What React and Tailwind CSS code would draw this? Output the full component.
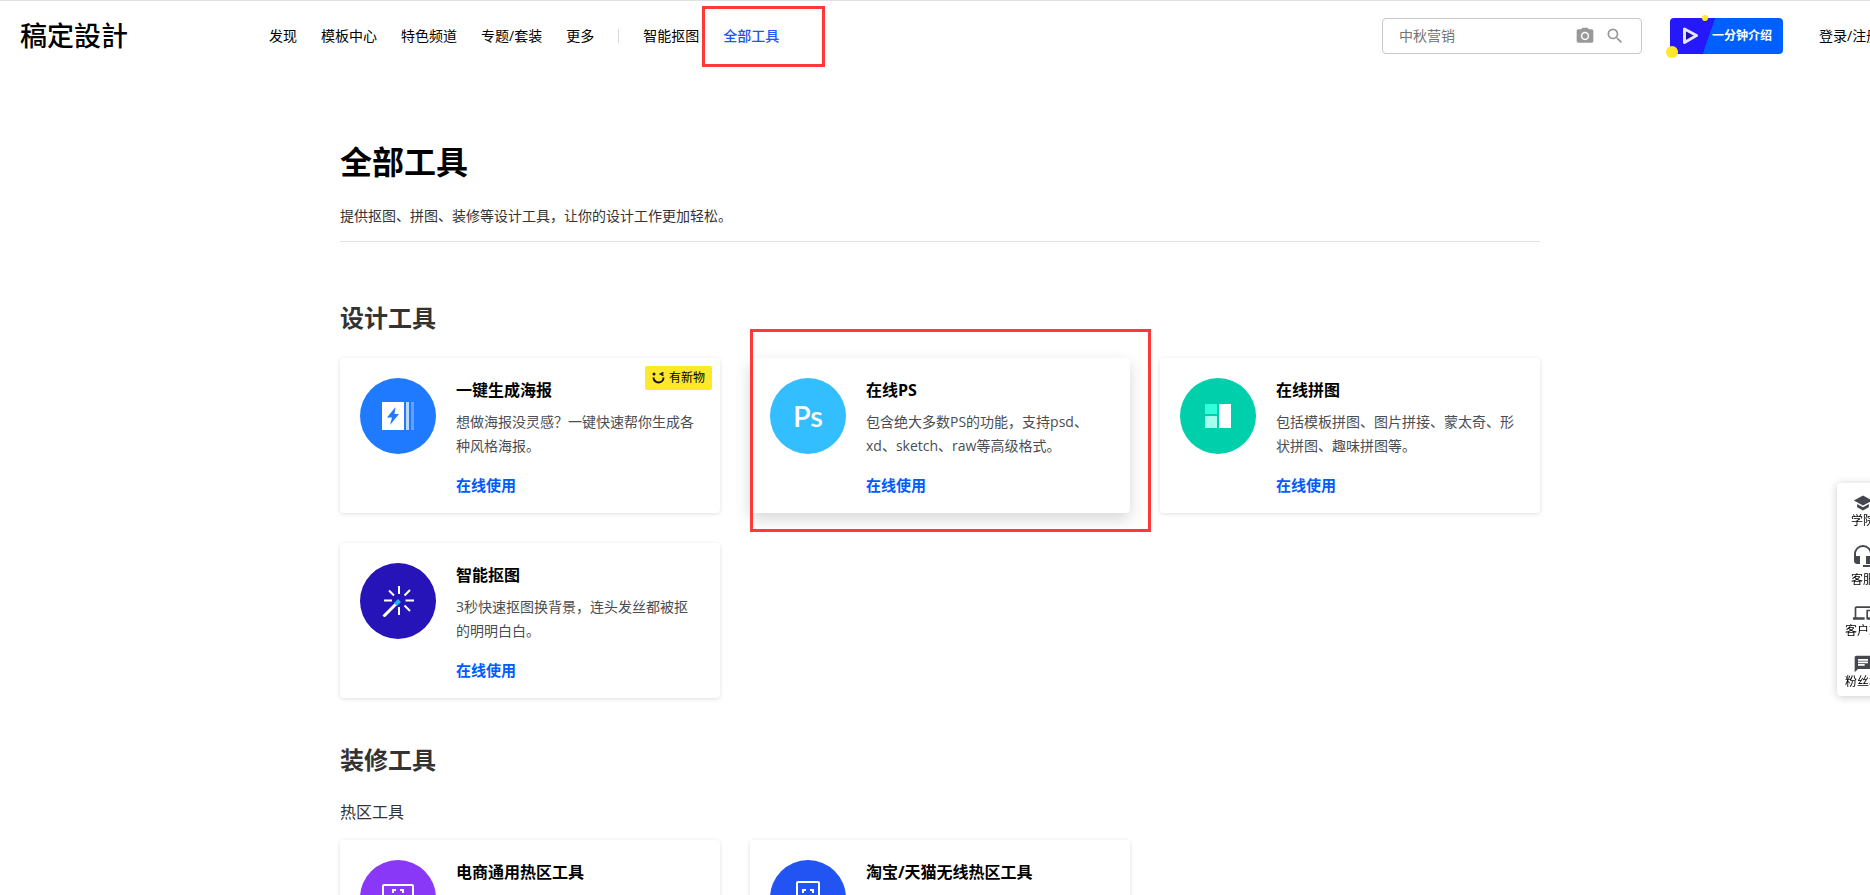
import { MdSchool, MdHeadsetMic, MdDevices, MdChat, MdCameraAlt, MdSearch } from 'react-icons/md'

const NAV = ['发现', '模板中心', '特色频道', '专题/套装', '更多']

const DESIGN_TOOLS = [
  {
    name: '一键生成海报',
    desc: '想做海报没灵感？一键快速帮你生成各种风格海报。',
    color: 'bg-[#1f7aff]',
    icon: <PosterIcon />,
    badge: '有新物',
  },
  {
    name: '在线PS',
    desc: '包含绝大多数PS的功能，支持psd、xd、sketch、raw等高级格式。',
    color: 'bg-[#33beff]',
    icon: <span className="font-['Lato',sans-serif] text-[29px] leading-8 font-semibold text-white">Ps</span>,
    active: true,
  },
  {
    name: '在线拼图',
    desc: '包括模板拼图、图片拼接、蒙太奇、形状拼图、趣味拼图等。',
    color: 'bg-[#00cfab]',
    icon: <CollageIcon />,
  },
  {
    name: '智能抠图',
    desc: '3秒快速抠图换背景，连头发丝都被抠的明明白白。',
    color: 'bg-[#2614b8]',
    icon: <WandIcon />,
  },
]

const HOTSPOT_TOOLS = [
  { name: '电商通用热区工具', color: 'bg-[#8a38f8]', icon: <ScreenIcon /> },
  { name: '淘宝/天猫无线热区工具', color: 'bg-[#2254f4]', icon: <PhoneIcon /> },
]

const SIDE_ITEMS = [
  { label: '学院', icon: <MdSchool size={20} />, box: 'h-5' },
  { label: '客服', icon: <MdHeadsetMic size={24} />, box: 'h-7' },
  { label: '客户端', icon: <MdDevices size={20} />, box: 'h-5' },
  { label: '粉丝群', icon: <MdChat size={20} />, box: 'h-5' },
]

function PosterIcon() {
  return (
    <svg width="32" height="28" viewBox="0 0 32 28">
      <rect width="22" height="28" fill="#fff" />
      <path d="M13.5 5 5 15.5h5L8 23l9-11h-4.500z" fill="#1f7aff" />
      <rect x="24" width="3" height="28" fill="#fff" opacity=".7" />
      <rect x="29" width="3" height="28" fill="#fff" opacity=".3" />
    </svg>
  )
}

function CollageIcon() {
  return (
    <svg width="26" height="24" viewBox="0 0 26 24">
      <rect width="12" height="10" fill="#33ffdb" />
      <rect y="12" width="12" height="12" fill="#a6ffee" />
      <rect x="14" width="12" height="24" fill="#fff" />
    </svg>
  )
}

function WandIcon() {
  return (
    <svg width="32" height="32" viewBox="0 0 32 32" fill="none" stroke="#fff" strokeWidth="2">
      <path d="M17 1v8M17 22v8M2 15.500h8M23.500 15.500H32M7 5.500l5 5M28 5l-5.500 5.500M28 26l-5.500-5.500" />
      <path d="M1.500 31.500 14 19" strokeWidth="3" />
      <path d="M13.500 19.500l4-4" stroke="#1fb6ff" strokeWidth="4" />
    </svg>
  )
}

function ScreenIcon() {
  return (
    <svg width="32" height="28" viewBox="0 0 32 28" fill="none" stroke="#fff" strokeWidth="2">
      <rect x="1" y="1" width="30" height="22" rx="1" />
      <path d="M11 9V6h3M18 6h3v3M21 15v3h-3M14 18h-3v-3M8 27h16" />
    </svg>
  )
}

function PhoneIcon() {
  return (
    <svg width="24" height="34" viewBox="0 0 24 34" fill="none" stroke="#fff" strokeWidth="2">
      <rect x="1" y="1" width="22" height="32" rx="1" />
      <path d="M7 12V9h3M14 9h3v3M17 18v3h-3M10 21H7v-3M9 28h6" />
    </svg>
  )
}

function WinkIcon() {
  return (
    <svg width="13" height="12" viewBox="0 0 13 12" fill="none" stroke="#111" strokeWidth="2">
      <path d="M1.500 5.500a5 5 0 0 0 10 0" />
      <circle cx="2" cy="2" r="1.500" fill="#111" stroke="none" />
      <path d="M11.500 .5 8.500 2l3 1.500" strokeWidth="1.500" />
    </svg>
  )
}

function ToolCard({ tool }) {
  return (
    <article
      className={`relative flex min-h-[155px] gap-5 rounded bg-white p-5 ${
        tool.active ? 'shadow-[0_6px_16px_rgba(0,0,0,0.16)]' : 'shadow-[0_1px_4px_rgba(0,0,0,0.13)]'
      }`}
    >
      <div className={`flex size-[76px] shrink-0 items-center justify-center rounded-full ${tool.color}`}>
        {tool.icon}
      </div>
      <div className="min-w-0">
        <h3 className="text-base leading-6 font-bold text-black">{tool.name}</h3>
        {tool.desc && (
          <>
            <p className="mt-2 text-sm leading-6 text-[#4a4d52]">{tool.desc}</p>
            <a href="#" className="mt-5 block text-[15px] leading-[15px] font-bold text-[#005cff]">在线使用</a>
          </>
        )}
      </div>
      {tool.badge && (
        <span className="absolute top-2 right-2 flex h-6 items-center gap-1 rounded-xs bg-[#ffe72b] px-[7px] text-xs text-black">
          <WinkIcon />
          {tool.badge}
        </span>
      )}
      {tool.active && (
        <span className="pointer-events-none absolute -top-[29px] -right-[21px] -bottom-[19px] left-0 border-3 border-[#ff3838]" />
      )}
    </article>
  )
}

function Header() {
  return (
    <header className="flex h-[71px] items-center border-t border-[#e0e0e0] pl-5 text-sm leading-5 whitespace-nowrap text-black">
      <a href="#" className="w-[249px] shrink-0 text-[27px] leading-8 font-medium">稿定設計</a>
      <nav className="flex items-center gap-6">
        {NAV.map(item => (
          <a key={item} href="#">{item}</a>
        ))}
        <span className="h-3.5 w-px bg-[#d8d8de]" />
        <a href="#">智能抠图</a>
        <a href="#" className="relative font-medium text-[#2254f4]">
          全部工具
          <span className="pointer-events-none absolute -top-5 -right-[46px] -bottom-[21px] -left-[21px] border-3 border-[#ff3838]" />
        </a>
      </nav>

      {/* Search, intro video, login */}
      <form className="ml-auto flex h-9 w-[260px] items-center rounded border border-[#c8c8c8] px-4 text-[#999]">
        <input
          type="text"
          aria-label="搜索模板"
          placeholder="中秋营销"
          className="min-w-0 flex-1 outline-none placeholder:text-[#757575]"
        />
        <button type="button" aria-label="以图搜索" className="mr-2.5">
          <MdCameraAlt size={20} />
        </button>
        <button type="submit" aria-label="搜索">
          <MdSearch size={20} />
        </button>
      </form>
      <button
        type="button"
        className="relative ml-7 flex h-9 w-[113px] shrink-0 items-center justify-end rounded bg-[linear-gradient(109deg,#2518fb_36%,#005fff_36%)] pr-[11px] text-xs font-bold text-white"
      >
        <svg className="absolute top-2 left-3" width="18" height="20" viewBox="0 0 18 20">
          <path d="M2.500 3v13.500L14.500 9.500z" fill="#1a0fb0" stroke="#e6e2ff" strokeWidth="3" strokeLinejoin="round" />
        </svg>
        一分钟介绍
        <span className="absolute -bottom-1 -left-1 size-3 rounded-full bg-[#ffe72b]" />
        <span className="absolute -top-[3px] left-8 size-1.5 rounded-full bg-[#ffe72b]" />
      </button>
      <a href="#" className="ml-9 w-[51px] shrink-0">登录/注册</a>
    </header>
  )
}

function SideBar() {
  return (
    <aside className="fixed top-[483px] -right-[19px] flex w-[52px] flex-col gap-[15px] rounded bg-white pt-2.5 pb-1.5 shadow-[0_1px_8px_rgba(0,0,0,0.2)]">
      {SIDE_ITEMS.map(item => (
        <a key={item.label} href="#" className="flex flex-col items-center text-xs leading-4 text-black">
          <span className={`text-[#44474d] ${item.box}`}>{item.icon}</span>
          {item.label}
        </a>
      ))}
    </aside>
  )
}

export default function App() {
  return (
    <div lang="zh-CN" className="h-screen overflow-hidden bg-white font-['Open_Sans','Noto_Sans_CJK_SC',sans-serif]">
      <Header />
      <div className="pl-2.5">
        <main className="mx-auto max-w-[1200px] pt-[67px] text-[#333]">
          <h1 className="text-[32px] leading-[48px] font-bold text-black">全部工具</h1>
          <p className="mt-[18px] border-b border-[#e4e4e4] pb-[13px] text-sm leading-6">
            提供抠图、拼图、装修等设计工具，让你的设计工作更加轻松。
          </p>

          <section className="mt-[58px]">
            <h2 className="text-2xl leading-9 font-bold">设计工具</h2>
            <div className="mt-[22px] grid grid-cols-3 gap-[30px]">
              {DESIGN_TOOLS.map(tool => (
                <ToolCard key={tool.name} tool={tool} />
              ))}
            </div>
          </section>

          <section className="mt-11">
            <h2 className="text-2xl leading-9 font-bold">装修工具</h2>
            <p className="mt-[22px] text-base leading-6">热区工具</p>
            <div className="mt-4 grid grid-cols-3 gap-[30px]">
              {HOTSPOT_TOOLS.map(tool => (
                <ToolCard key={tool.name} tool={tool} />
              ))}
            </div>
          </section>
        </main>
      </div>
      <SideBar />
    </div>
  )
}
